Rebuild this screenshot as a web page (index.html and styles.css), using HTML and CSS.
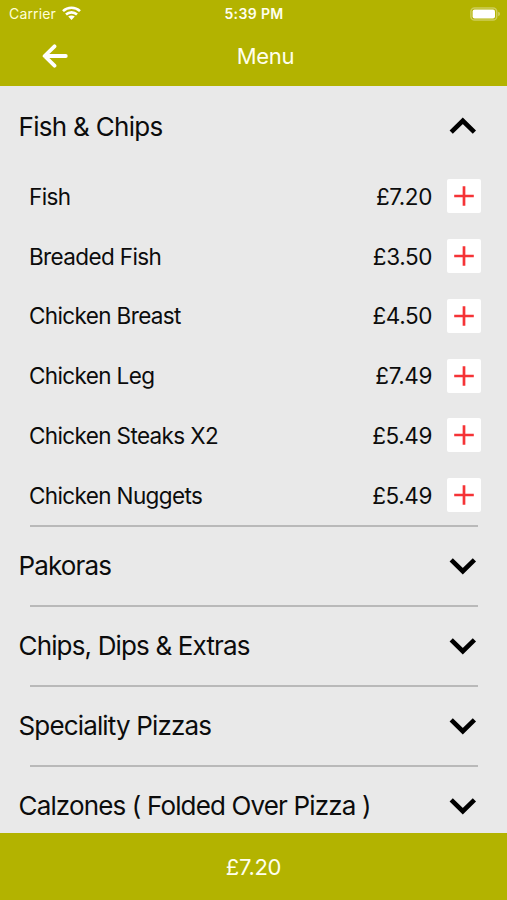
FILE: index.html
```html
<!DOCTYPE html>
<html lang="en">
<head>
<meta charset="utf-8">
<title>Menu</title>
<link rel="stylesheet" href="styles.css">
</head>
<body>
<svg class="symbols" aria-hidden="true">
  <symbol id="chevron-down" viewBox="0 0 28 18"><path d="M2.2 2.8 13.8 14.2 25.4 2.8" fill="none" stroke="currentColor" stroke-width="4.6"/></symbol>
  <symbol id="chevron-up" viewBox="0 0 28 18"><path d="M2.2 15.2 13.8 3.8 25.4 15.2" fill="none" stroke="currentColor" stroke-width="4.6"/></symbol>
  <symbol id="plus" viewBox="0 0 20 20"><path d="M10 .2V19.8M.2 10H19.8" fill="none" stroke="currentColor" stroke-width="2.7"/></symbol>
</svg>
<div class="screen">
  <header class="header">
    <div class="status">
      <div class="carrier"><span>Carrier</span>
        <svg class="wifi" viewBox="0 0 19 14"><g fill="none" stroke="currentColor" stroke-width="2.6"><path d="M1 5.1C5.7.6 13.3.6 18 5.1"/><path d="M4 8.5C7.1 5.6 11.9 5.6 15 8.5"/></g><path d="M6.2 10.6C8.1 9 10.9 9 12.8 10.6L9.5 13.9Z" fill="currentColor"/></svg>
      </div>
      <span class="clock">5:39 PM</span>
      <svg class="battery" viewBox="0 0 31 14"><rect x=".9" y=".9" width="25.8" height="12.2" rx="3.6" fill="none" stroke="#fff" stroke-opacity=".35" stroke-width="1.5"/><rect x="2.6" y="2.6" width="22.4" height="8.8" rx="2" fill="#fff"/><path d="M28.2 4.8Q30 5.4 30 7T28.2 9.2Z" fill="#fff" fill-opacity=".4"/></svg>
    </div>
    <nav class="nav">
      <svg class="back" viewBox="0 0 26 24"><path d="M12.5 2.3 2.6 12 12.5 21.7M2.8 12H23.8" fill="none" stroke="currentColor" stroke-width="3.8" stroke-linecap="round" stroke-linejoin="round"/></svg>
      <h1 class="title">Menu</h1>
    </nav>
  </header>
  <main class="menu">
    <section class="section">
      <h2 class="heading"><span>Fish &amp; Chips</span><svg class="chevron"><use href="#chevron-up"/></svg></h2>
      <ul class="items">
        <li class="item"><span class="name">Fish</span><span class="price">£7.20</span><button class="add"><svg><use href="#plus"/></svg></button></li>
        <li class="item"><span class="name">Breaded Fish</span><span class="price">£3.50</span><button class="add"><svg><use href="#plus"/></svg></button></li>
        <li class="item"><span class="name">Chicken Breast</span><span class="price">£4.50</span><button class="add"><svg><use href="#plus"/></svg></button></li>
        <li class="item"><span class="name">Chicken Leg</span><span class="price">£7.49</span><button class="add"><svg><use href="#plus"/></svg></button></li>
        <li class="item"><span class="name">Chicken Steaks X2</span><span class="price">£5.49</span><button class="add"><svg><use href="#plus"/></svg></button></li>
        <li class="item"><span class="name">Chicken Nuggets</span><span class="price">£5.49</span><button class="add"><svg><use href="#plus"/></svg></button></li>
      </ul>
    </section>
    <section class="section"><h2 class="heading"><span>Pakoras</span><svg class="chevron"><use href="#chevron-down"/></svg></h2></section>
    <section class="section"><h2 class="heading"><span>Chips, Dips &amp; Extras</span><svg class="chevron"><use href="#chevron-down"/></svg></h2></section>
    <section class="section"><h2 class="heading"><span>Speciality Pizzas</span><svg class="chevron"><use href="#chevron-down"/></svg></h2></section>
    <section class="section"><h2 class="heading"><span>Calzones ( Folded Over Pizza )</span><svg class="chevron"><use href="#chevron-down"/></svg></h2></section>
  </main>
  <footer class="total">£7.20</footer>
</div>
</body>
</html>
```
FILE: styles.css
```css
* { box-sizing: border-box; }
body { margin: 0; font-family: Inter, "Liberation Sans", sans-serif; color: #0c0c0c; }
.symbols { display: none; }
.screen { display: flex; flex-direction: column; height: 900px; overflow: hidden; background: #e9e9e9; }
.header { flex: none; height: 86px; background: #b3b300; color: #fff; }
.status { display: grid; grid-template-columns: 1fr auto 1fr; align-items: center; height: 27px; padding: 0 8px 0 9px; font-size: 14px; }
.carrier { display: flex; align-items: center; gap: 6px; color: #ffffd8; letter-spacing: .15px; }
.wifi { width: 19px; height: 14px; margin-top: -1px; color: #fff; }
.clock { font-weight: 600; letter-spacing: .35px; color: #fffff0; }
.battery { justify-self: end; width: 31px; height: 14px; margin-right: -2px; }
.nav { display: grid; grid-template-columns: 1fr auto 1fr; align-items: center; height: 58px; }
.back { width: 26px; height: 24px; margin-left: 42px; }
.title { grid-column: 2; margin: 0 0 0 24px; font-size: 22px; font-weight: 400; letter-spacing: -.3px; color: #ffffed; }
.menu { flex: 1; min-height: 0; overflow: hidden; }
.section + .section::before { content: ""; display: block; height: 2px; margin: 0 29px 0 30px; background: #b9b9b9; }
.heading { display: flex; align-items: center; justify-content: space-between; height: 78px; margin: 0; padding: 0 30px 0 18.5px; font-size: 26px; font-weight: 400; letter-spacing: -.85px; }
.section:first-child .heading { height: 80px; letter-spacing: -.7px; }
.chevron { width: 28px; height: 18px; color: #000; }
.items { margin: 0; padding: .4px 26px 0 29px; list-style: none; }
.item { display: flex; align-items: center; height: 59.8px; font-size: 22.5px; letter-spacing: -.4px; }
.item:last-child { height: 59.4px; }
.name { flex: 1; letter-spacing: -.63px; }
.price { margin-right: 15px; }
.add { display: grid; place-items: center; width: 34px; height: 34px; padding: 0; border: 0; border-radius: 2px; background: #fff; color: #f53336; }
.add svg { width: 20px; height: 20px; }
.total { flex: none; display: flex; align-items: center; justify-content: center; height: 67px; background: #b3b300; color: #ffffed; font-size: 22px; letter-spacing: -.3px; }
```
